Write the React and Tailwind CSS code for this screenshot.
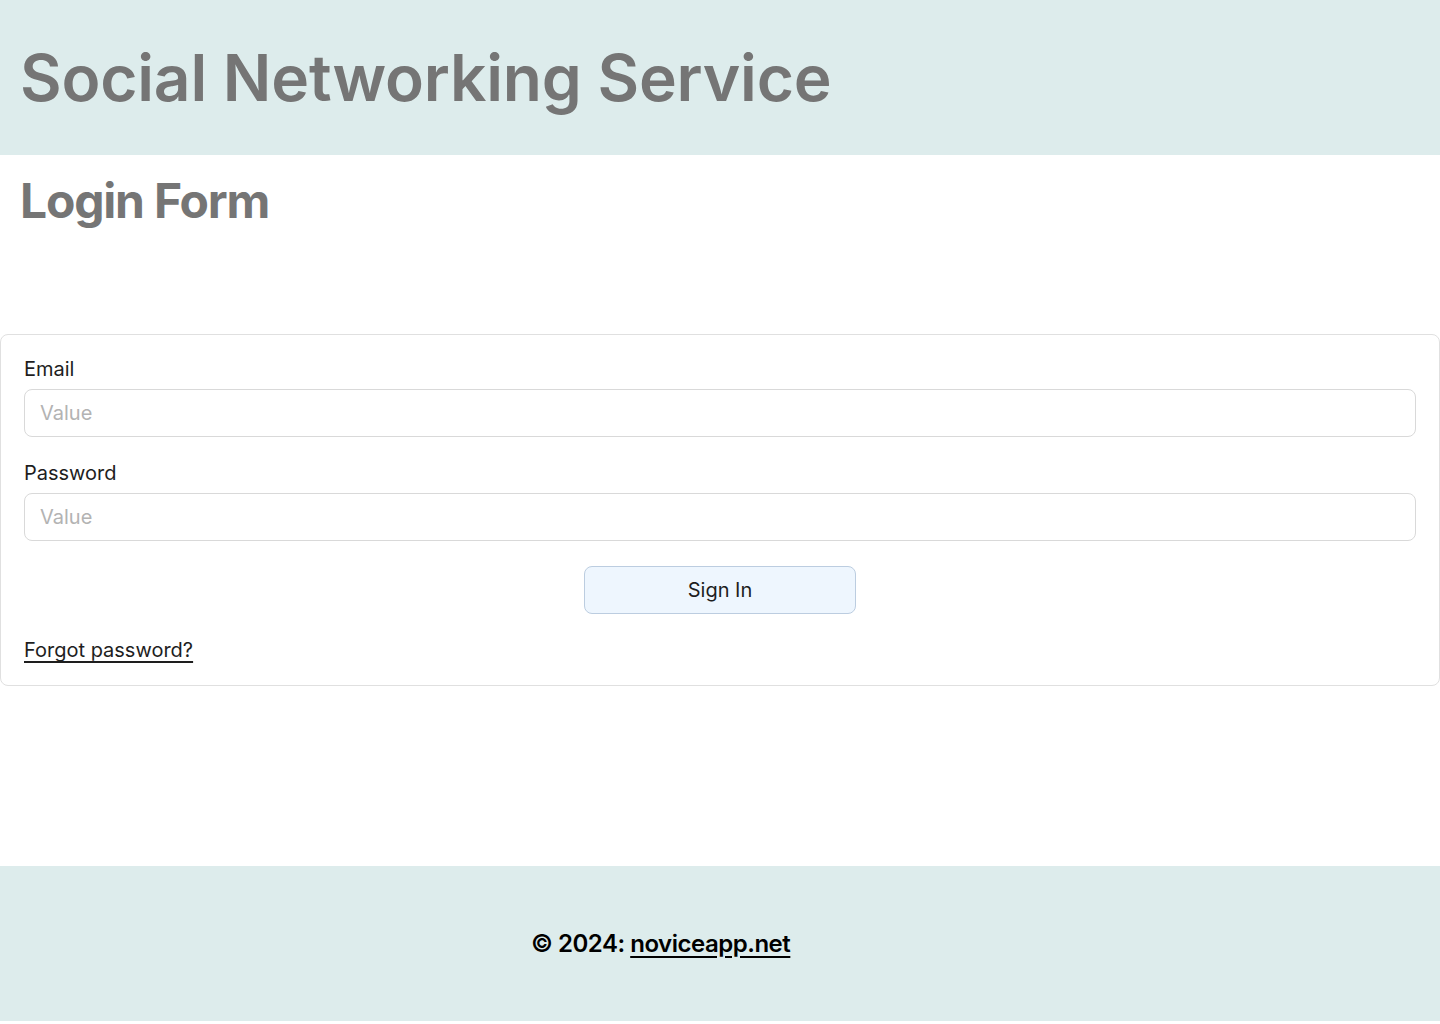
import React from "react";

const Field = ({ label, type = "text" }) => (
  <div className="flex flex-col gap-2">
    <label className="text-[20px] leading-6 text-[#1e1e1e]">{label}</label>
    <input
      type={type}
      placeholder="Value"
      className="h-12 w-full rounded-lg border border-[#d9d9d9] bg-white px-[15px] text-[20px] text-[#1e1e1e] placeholder:text-[#b3b3b3] outline-none"
    />
  </div>
);

export default function App() {
  return (
    <div className="min-h-[1024px] bg-white" style={{ fontFamily: "Inter, 'Noto Sans', sans-serif" }}>
      {/* Header */}
      <header className="flex h-[155px] items-center bg-[#ddecec] px-5">
        <h1 className="text-[64px] font-semibold leading-tight tracking-[-0.2px] text-[#757575]">
          Social Networking Service
        </h1>
      </header>

      {/* Main */}
      <main className="h-[711px]">
        <h2 className="px-5 pt-[22px] text-5xl font-bold leading-none tracking-tight text-[#757575]">
          Login Form
        </h2>
        <form
          className="mt-[109px] flex flex-col gap-6 rounded-lg border border-[#e0e0e0] px-[23px] py-[22px]"
          onSubmit={(e) => e.preventDefault()}
        >
          <Field label="Email" type="email" />
          <Field label="Password" type="password" />
          <div className="mt-px flex justify-center">
            <button
              type="submit"
              className="h-12 w-[272px] rounded-lg border border-[#bccde0] bg-[#eef6fe] text-[20px] text-[#1e1e1e]"
            >
              Sign In
            </button>
          </div>
          <div className="leading-6">
            <a href="#" className="text-[20px] text-[#1e1e1e] underline underline-offset-4">
              Forgot password?
            </a>
          </div>
        </form>
      </main>

      {/* Footer */}
      <footer className="flex h-[155px] items-center bg-[#ddecec] pl-[531px]">
        <p className="text-2xl font-semibold tracking-[-0.02em] text-black">
          © 2024:{" "}
          <a href="#" className="underline underline-offset-4">
            noviceapp.net
          </a>
        </p>
      </footer>
    </div>
  );
}
